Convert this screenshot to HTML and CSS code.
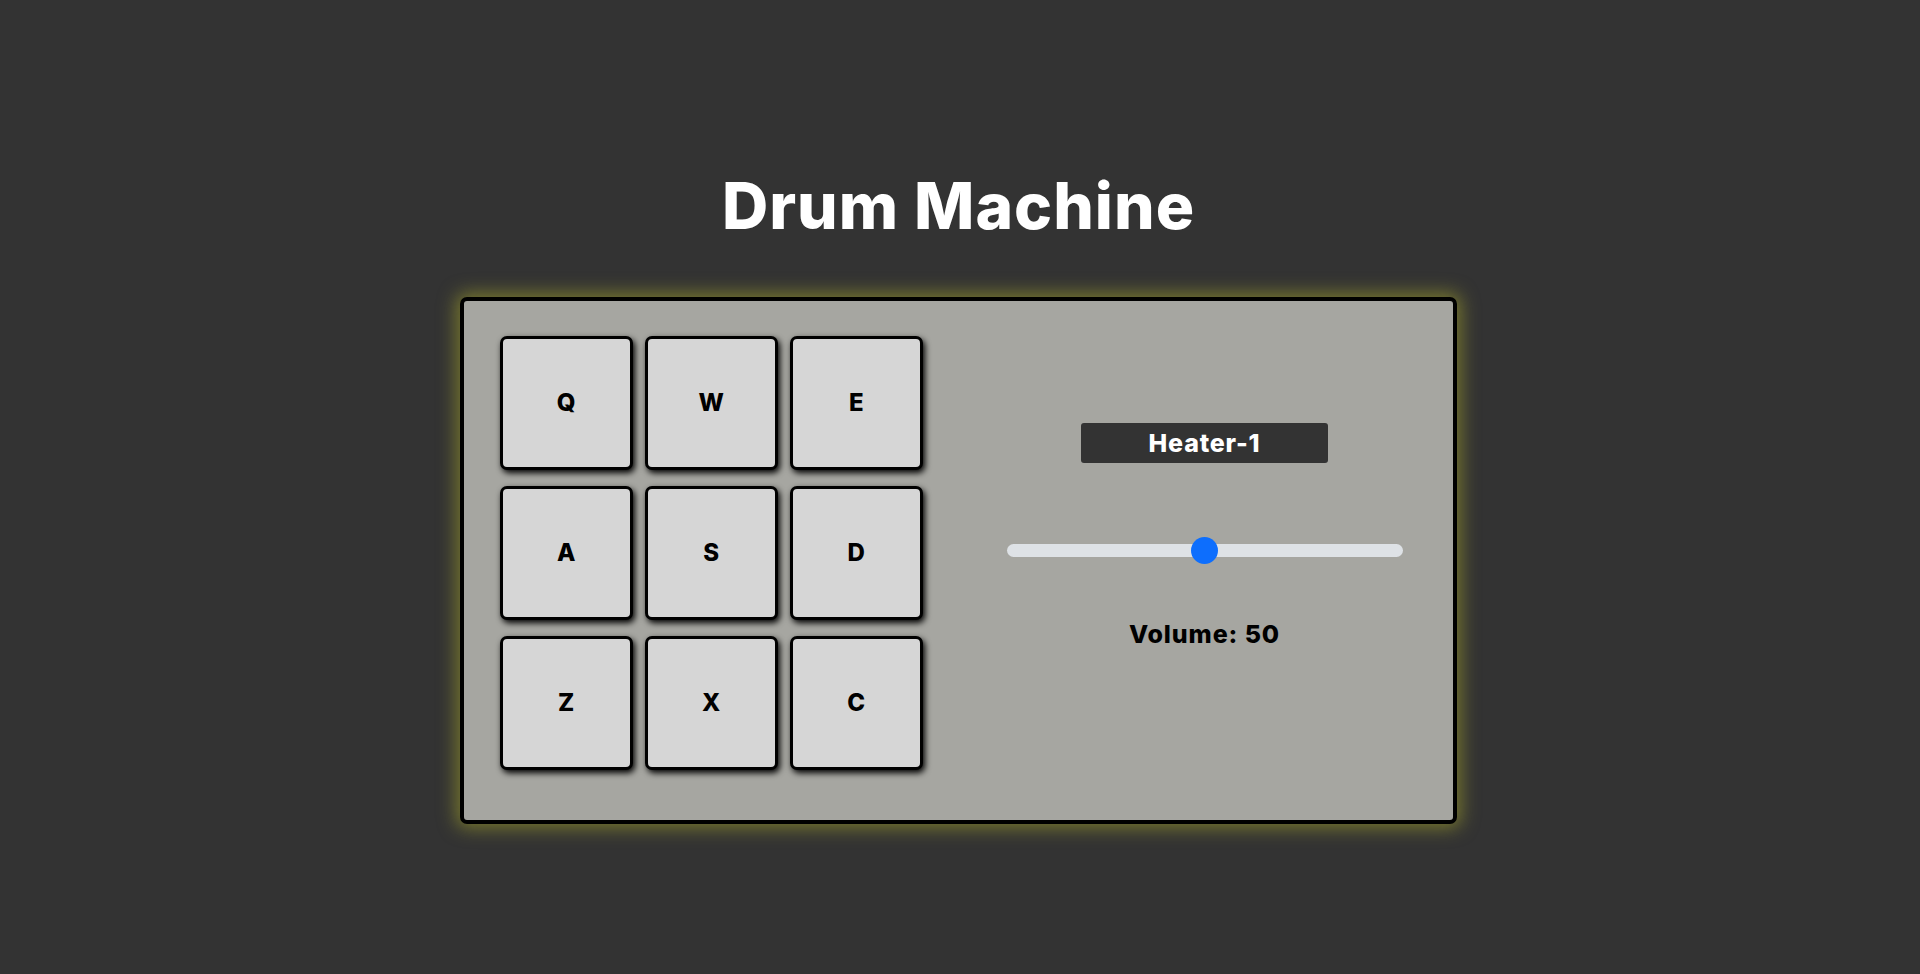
FILE: index.html
```html
<!DOCTYPE html>
<html lang="en">
<head>
<meta charset="utf-8">
<title>Drum Machine</title>
<link rel="stylesheet" href="styles.css">
</head>
<body>
<div class="app">
  <h1 class="title">Drum Machine</h1>
  <div class="machine" id="drum-machine">
    <div class="pads">
      <button class="pad">Q</button>
      <button class="pad">W</button>
      <button class="pad">E</button>
      <button class="pad">A</button>
      <button class="pad">S</button>
      <button class="pad">D</button>
      <button class="pad">Z</button>
      <button class="pad">X</button>
      <button class="pad">C</button>
    </div>
    <div class="controls">
      <div class="display">Heater-1</div>
      <input class="volume" type="range" min="0" max="100" value="50">
      <div class="volume-label">Volume: 50</div>
    </div>
  </div>
</div>
</body>
</html>
```

FILE: styles.css
```css
html, body {
  margin: 0;
  padding: 0;
}

body {
  background: #333333;
  min-height: 100vh;
  font-family: Inter, "Noto Sans", "Liberation Sans", sans-serif;
}

.app {
  display: flex;
  flex-direction: column;
  align-items: center;
  padding-top: 168px;
  padding-right: 3px;
}

.title {
  margin: 0 0 52px;
  font-size: 64px;
  line-height: 1.2;
  font-weight: 800;
  color: #ffffff;
  letter-spacing: 1px;
}

.machine {
  box-sizing: border-box;
  width: 997px;
  height: 527px;
  border: 4px solid #000000;
  border-radius: 7px;
  background: #a6a6a1;
  box-shadow: 0 0 18px 4px rgba(185, 185, 40, 0.5);
  display: flex;
  padding: 35px 0 0 36px;
}

.pads {
  display: grid;
  grid-template-columns: repeat(3, 133px);
  grid-auto-rows: 134px;
  column-gap: 12px;
  row-gap: 16px;
  align-content: start;
}

.pad {
  box-sizing: border-box;
  border: 3px solid #000000;
  border-radius: 7px;
  background: #d6d6d6;
  box-shadow: 2px 3px 6px #000000;
  font-family: Inter, "Noto Sans", sans-serif;
  font-weight: 800;
  font-size: 24px;
  letter-spacing: 0.5px;
  color: #000000;
  padding: 0;
  cursor: pointer;
}

.controls {
  flex: 1;
  margin-left: 33px;
  display: flex;
  flex-direction: column;
  align-items: center;
  padding-top: 87px;
}

.display {
  width: 247px;
  height: 40px;
  background: #333333;
  border-radius: 3px;
  color: #ffffff;
  font-weight: 800;
  font-size: 25px;
  letter-spacing: 0.8px;
  line-height: 40px;
  text-align: center;
}

.volume {
  -webkit-appearance: none;
  appearance: none;
  width: 396px;
  height: 27px;
  margin: 74px 0 0;
  padding: 0;
  background: transparent;
}

.volume::-webkit-slider-runnable-track {
  height: 13px;
  background: #dee2e6;
  border-radius: 7px;
}

.volume::-webkit-slider-thumb {
  -webkit-appearance: none;
  appearance: none;
  width: 27px;
  height: 27px;
  margin-top: -7px;
  border: 0;
  border-radius: 50%;
  background: #0d6efd;
}

.volume-label {
  margin-top: 55px;
  font-weight: 800;
  font-size: 25px;
  letter-spacing: 0.9px;
  line-height: 30px;
  color: #000000;
}
```
